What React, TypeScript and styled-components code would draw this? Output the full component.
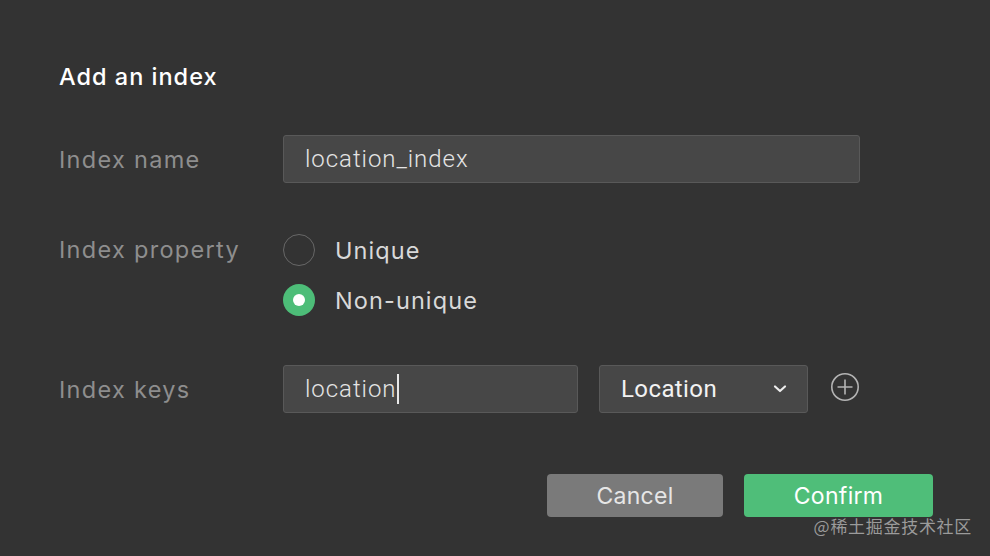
import React from 'react';
import styled, { createGlobalStyle } from 'styled-components';

const GlobalStyle = createGlobalStyle`
	html, body {
		margin: 0;
		padding: 0;
		background: #333333;
	}
	* {
		box-sizing: border-box;
	}
`;

const Dialog = styled.div`
	position: relative;
	width: 990px;
	height: 556px;
	background: #333333;
	padding: 62px 57px 0 59px;
	font-family: Inter, 'Noto Sans', sans-serif;
	overflow: hidden;
`;

const Title = styled.h1`
	margin: 0;
	font-size: 23.5px;
	line-height: 30px;
	font-weight: 450;
	letter-spacing: 1px;
	color: #ffffff;
`;

const Row = styled.div<{ $top: number; $align?: string }>`
	display: flex;
	align-items: ${(p) => p.$align || 'center'};
	margin-top: ${(p) => p.$top}px;
`;

const Label = styled.div<{ $height?: number }>`
	width: 224px;
	flex-shrink: 0;
	font-size: 23.5px;
	letter-spacing: 1.3px;
	color: #8e8e8e;
	height: ${(p) => (p.$height ? `${p.$height}px` : 'auto')};
	line-height: ${(p) => (p.$height ? `${p.$height}px` : 'normal')};
`;

const Field = styled.div<{ $width: number }>`
	position: relative;
	display: flex;
	align-items: center;
	width: ${(p) => p.$width}px;
	height: 48px;
	padding: 0 20px 0 21px;
	background: #474747;
	border: 1px solid #595959;
	border-radius: 3px;
	font-family: Roboto, 'Noto Sans', sans-serif;
	font-size: 24px;
	font-weight: 300;
	letter-spacing: 0.95px;
	color: #e4e4e4;
`;

const Caret = styled.span`
	display: inline-block;
	width: 2px;
	height: 30px;
	margin-left: 1px;
	background: #e8e8e8;
`;

const SelectBox = styled(Field)`
	justify-content: space-between;
	margin-left: 21px;
	font-weight: 400;
	letter-spacing: 0.4px;
	color: #f2f2f2;
	padding-right: 19px;
`;

const RadioGroup = styled.div`
	display: flex;
	flex-direction: column;
	gap: 10px;
`;

const RadioItem = styled.label`
	display: flex;
	align-items: center;
	height: 40px;
	gap: 20px;
	font-size: 23.5px;
	letter-spacing: 1.1px;
	color: #d9d9d9;
`;

const RadioCircle = styled.span<{ $checked?: boolean }>`
	display: flex;
	align-items: center;
	justify-content: center;
	width: 32px;
	height: 32px;
	border-radius: 50%;
	border: ${(p) => (p.$checked ? 'none' : '1.5px solid #676767')};
	background: ${(p) => (p.$checked ? '#4dbd78' : 'transparent')};

	&::after {
		content: '';
		display: ${(p) => (p.$checked ? 'block' : 'none')};
		width: 12px;
		height: 12px;
		border-radius: 50%;
		background: #ffffff;
	}
`;

const AddButton = styled.button`
	display: flex;
	align-items: center;
	justify-content: center;
	width: 30px;
	height: 30px;
	margin-left: 22px;
	margin-top: -4px;
	padding: 0;
	border: none;
	background: none;
	cursor: pointer;
`;

const Footer = styled.div`
	display: flex;
	justify-content: flex-end;
	gap: 21px;
	margin-top: 61px;
`;

const Button = styled.button<{ $primary?: boolean }>`
	width: ${(p) => (p.$primary ? 189 : 176)}px;
	height: 43px;
	border: none;
	border-radius: 4px;
	background: ${(p) => (p.$primary ? '#4fbe79' : '#7a7a7a')};
	color: ${(p) => (p.$primary ? '#ffffff' : '#e6e6e6')};
	font-family: Inter, 'Noto Sans', sans-serif;
	font-size: 23px;
	letter-spacing: 0.3px;
	cursor: pointer;
`;

const Watermark = styled.div`
	position: absolute;
	right: 18px;
	bottom: 18px;
	font-family: 'Noto Sans CJK SC', sans-serif;
	font-size: 17px;
	color: rgba(190, 190, 190, 0.75);
	letter-spacing: 0.7px;
`;

const App = () => {
	return (
		<>
			<GlobalStyle />
			<Dialog>
				<Title>Add an index</Title>

				<Row $top={43}>
					<Label>Index name</Label>
					<Field $width={577}>location_index</Field>
				</Row>

				<Row $top={47} $align="flex-start">
					<Label $height={40}>Index property</Label>
					<RadioGroup>
						<RadioItem>
							<RadioCircle />
							Unique
						</RadioItem>
						<RadioItem>
							<RadioCircle $checked />
							Non-unique
						</RadioItem>
					</RadioGroup>
				</Row>

				<Row $top={45}>
					<Label>Index keys</Label>
					<Field $width={295}>
						location
						<Caret />
					</Field>
					<SelectBox $width={209}>
						Location
						<svg width="16" height="10" viewBox="0 0 16 10">
							<path d="M3 2.5 L8 7 L13 2.5" fill="none" stroke="#ededed" strokeWidth="2.2" strokeLinecap="round" strokeLinejoin="round" />
						</svg>
					</SelectBox>
					<AddButton>
						<svg width="30" height="30" viewBox="0 0 30 30">
							<circle cx="15" cy="15" r="13.2" fill="none" stroke="#b4b4b4" strokeWidth="1.6" />
							<path d="M15 7.5 V22.5 M7.5 15 H22.5" stroke="#b4b4b4" strokeWidth="1.6" />
						</svg>
					</AddButton>
				</Row>

				<Footer>
					<Button>Cancel</Button>
					<Button $primary>Confirm</Button>
				</Footer>

				<Watermark>@稀土掘金技术社区</Watermark>
			</Dialog>
		</>
	);
};

export default App;
